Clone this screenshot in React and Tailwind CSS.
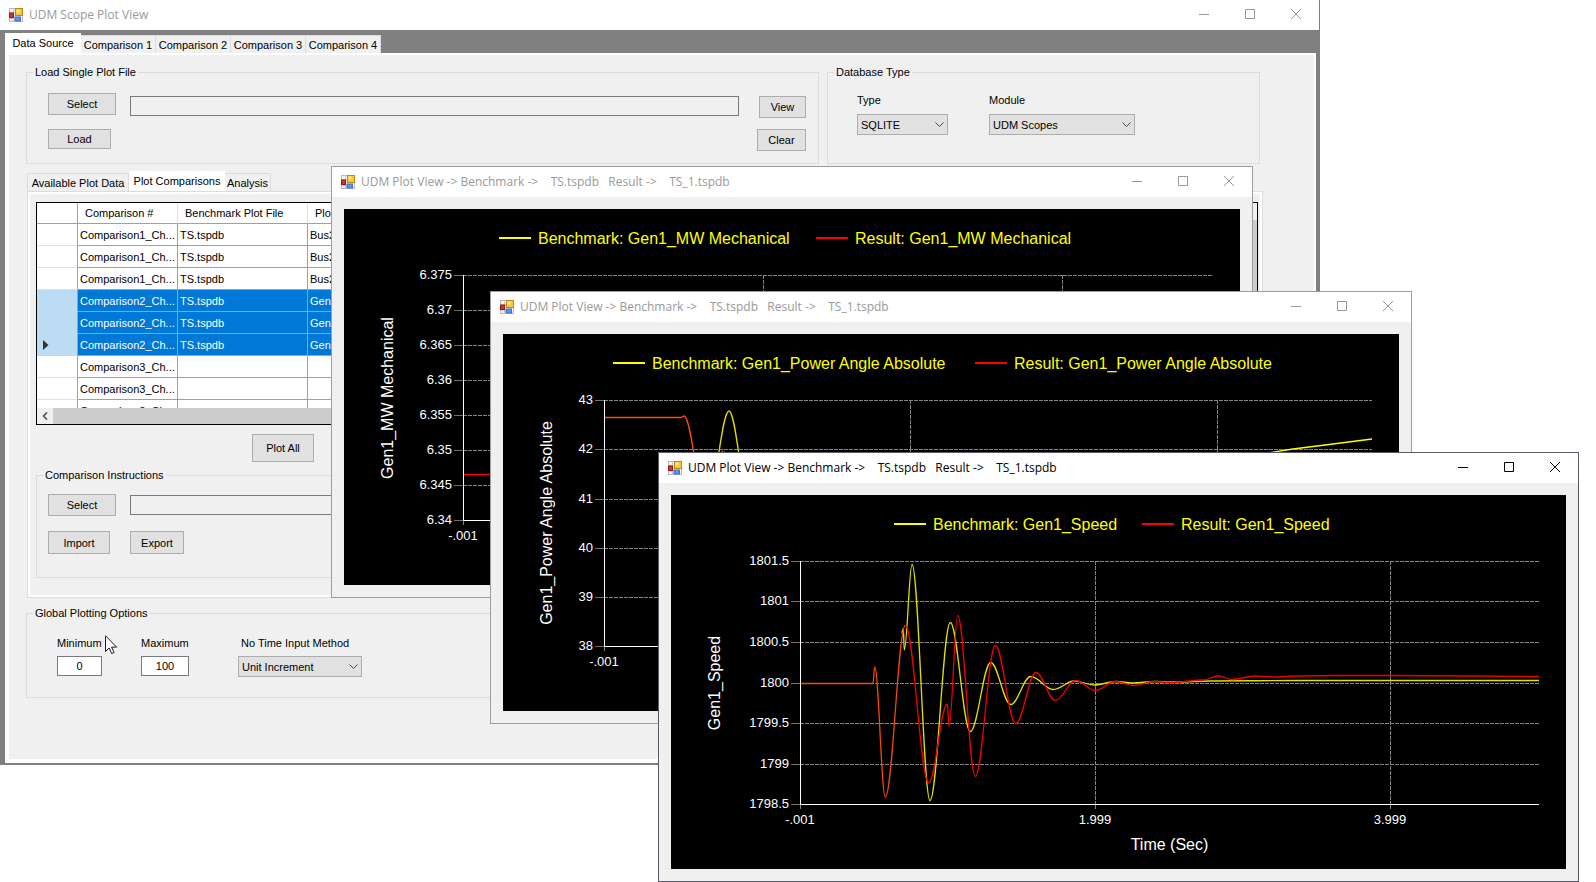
import React, { useState } from 'react';
import clsx from 'clsx';

const GRID_ROWS = [
  { id: 1, name: 'Comparison1_Ch...', file: 'TS.tspdb', item: 'Bus2' },
  { id: 2, name: 'Comparison1_Ch...', file: 'TS.tspdb', item: 'Bus2' },
  { id: 3, name: 'Comparison1_Ch...', file: 'TS.tspdb', item: 'Bus2' },
  { id: 4, name: 'Comparison2_Ch...', file: 'TS.tspdb', item: 'Gen', selected: true },
  { id: 5, name: 'Comparison2_Ch...', file: 'TS.tspdb', item: 'Gen', selected: true },
  { id: 6, name: 'Comparison2_Ch...', file: 'TS.tspdb', item: 'Gen', selected: true, current: true },
  { id: 7, name: 'Comparison3_Ch...', file: '', item: '' },
  { id: 8, name: 'Comparison3_Ch...', file: '', item: '' },
  { id: 9, name: 'Comparison3_Ch...', file: '', item: '' },
];

const MECHANICAL = {
  width: 896,
  height: 376,
  name: 'Gen1_MW Mechanical',
  legend: [155, 472],
  left: 119,
  right: 869,
  yTicks: [['6.375', 66], ['6.37', 101], ['6.365', 136], ['6.36', 171], ['6.355', 206], ['6.35', 241], ['6.345', 276], ['6.34', 311]],
  xTicks: [['-.001', 119], ['', 419], ['', 718]],
  series: [{ color: '#ff0000', points: [[120, 265.5], [869, 265.5]] }],
};

const ANGLE = {
  width: 896,
  height: 377,
  name: 'Gen1_Power Angle Absolute',
  legend: [110, 472],
  left: 101,
  right: 869,
  yTicks: [['43', 66], ['42', 115], ['41', 165], ['40', 214], ['39', 263], ['38', 312]],
  xTicks: [['-.001', 101], ['', 407], ['', 714]],
  series: [
    { color: '#dfdf00', points: [[205, 165], [226, 77], [246, 165]] },
    { color: '#ff0000', points: [[204, 165], [220, 117], [236, 165]] },
    { color: '#ff4a0a', points: [[102, 83.5], [178, 83.5], [181, 82], [202, 165]] },
    { color: '#ffff00', straight: true, points: [[740, 123], [790, 115], [830, 110], [869, 105]] },
  ],
};

// Shared by both runs until the fault clears
const FAULT = [[130, 188.5], [202, 188.5], [203.7, 172], [214.3, 302], [234.3, 130.5]];

const SPEED = {
  width: 895,
  height: 374,
  name: 'Gen1_Speed',
  legend: [223, 471],
  left: 129,
  right: 868,
  yTicks: [['1801.5', 66], ['1801', 106], ['1800.5', 147], ['1800', 188], ['1799.5', 228], ['1799', 269], ['1798.5', 309]],
  xTicks: [['-.001', 129], ['1.999', 424], ['3.999', 719]],
  xTitle: 'Time (Sec)',
  series: [
    {
      color: '#e0e000',
      points: [
        [230.5, 138], [232.3, 134], [233.3, 155], [241, 69.5], [259, 305.5], [279.3, 127.5], [299.3, 236.5],
        [319.7, 167.5], [339.7, 209.5], [359.7, 181.5], [382.3, 194.5], [403.3, 186], [423.3, 190],
        [445, 186.5], [461.3, 188], [484, 186.5], [505, 187], [539, 186], [629, 185.5], [868, 185.5],
      ],
    },
    { color: '#f04a0a', points: FAULT },
    {
      color: '#f00000',
      points: [
        [234.3, 130.5], [257.7, 288], [276.3, 209], [278, 231.5], [286.7, 120.5], [304.3, 281.5],
        [324.3, 150.5], [344.7, 228.5], [365, 177.5], [384.3, 205.5], [404.7, 185.5], [424.3, 195.5],
        [444, 186.5], [463.3, 190.5], [483, 186.5], [500, 187.5], [532, 185], [547.3, 181], [560.7, 184.5],
        [584, 181], [602, 182], [625, 181], [662, 180.5], [719, 180.5], [868, 181.5],
      ],
    },
  ],
};

// Points are the turning points of the signal, joined with half sine waves
function toPath(points, straight) {
  return points
    .map(([x, y], i) => {
      if (i === 0) return `M${x} ${y}`;
      if (straight) return `L${x} ${y}`;
      const [px, py] = points[i - 1];
      const dx = (x - px) * 0.3642;
      return `C${px + dx} ${py} ${x - dx} ${y} ${x} ${y}`;
    })
    .join(' ');
}

function AppIcon() {
  return (
    <svg width="14" height="14" viewBox="0 0 14 14" className="shrink-0" aria-hidden="true">
      <rect x="0.5" y="0.5" width="13" height="13" fill="#f4f4f4" stroke="#b9b9b9" />
      <path d="M4.5 0v14M9.5 9v5M0 4.5h6M0 10.5h6" stroke="#c9c9c9" fill="none" />
      <rect x="6.5" y="0.5" width="7" height="7" fill="#f6c93c" stroke="#b98a12" />
      <rect x="7.5" y="1.5" width="3" height="3" fill="#fde48a" />
      <rect x="0.5" y="5" width="4" height="4.5" fill="#d0342c" stroke="#8f1d18" />
      <rect x="6" y="9" width="5.5" height="4" fill="#5b93ee" stroke="#3f6fd0" />
    </svg>
  );
}

function WindowButton({ label, path }) {
  return (
    <button type="button" aria-label={label} className="flex h-7 w-[46px] shrink-0 items-center justify-center self-start">
      <svg width="10" height="10" viewBox="0 0 10 10" fill="none" stroke="currentColor" aria-hidden="true">
        <path d={path} />
      </svg>
    </button>
  );
}

function TitleBar({ title, active }) {
  return (
    <div className={clsx('flex h-[30px] items-center bg-white pl-[9px]', active ? 'text-black' : 'text-[#999999]')}>
      <AppIcon />
      <span className="ml-[6px] flex-1 overflow-hidden whitespace-pre font-['Open_Sans',sans-serif] text-[12px] leading-[18px]">
        {title}
      </span>
      <WindowButton label="Minimize" path="M0 5.5h10" />
      <WindowButton label="Maximize" path="M0.5 0.5h9v9h-9z" />
      <WindowButton label="Close" path="M0 0l10 10M10 0l-10 10" />
    </div>
  );
}

function Button({ className, children }) {
  return (
    <button type="button" className={clsx('border border-[#adadad] bg-[#e1e1e1] text-center leading-4', className)}>
      {children}
    </button>
  );
}

function GroupBox({ title, className, children }) {
  return (
    <fieldset className={clsx('min-w-0 border border-[#dcdcdc]', className)}>
      <legend className="ml-[6px] px-[2px] leading-4">{title}</legend>
      {children}
    </fieldset>
  );
}

function Dropdown({ id, label, value, className, labelClassName }) {
  return (
    <div className={clsx('flex flex-col', className)}>
      <label htmlFor={id} className={clsx('whitespace-nowrap leading-4', labelClassName)}>{label}</label>
      <div className="relative">
        <select
          id={id}
          defaultValue={value}
          className="block h-[21px] w-full appearance-none border border-[#adadad] bg-[#e1e1e1] pl-[3px] leading-4"
        >
          <option>{value}</option>
        </select>
        <svg
          width="9"
          height="6"
          viewBox="0 0 9 6"
          className="pointer-events-none absolute right-1 top-2"
          fill="none"
          stroke="#444444"
          aria-hidden="true"
        >
          <path d="M0.5 0.5l4 4 4-4" />
        </svg>
      </div>
    </div>
  );
}

function NumberField({ id, label, value, className }) {
  return (
    <div className={clsx('flex flex-col gap-[5px]', className)}>
      <label htmlFor={id} className="whitespace-nowrap leading-4">{label}</label>
      <input id={id} defaultValue={value} className="h-5 w-full border border-[#7a7a7a] bg-white text-center leading-4" />
    </div>
  );
}

function TabStrip({ tabs, active, onSelect, className }) {
  return (
    <div role="tablist" className={clsx('flex items-end', className)}>
      {tabs.map((tab) => (
        <button
          key={tab.name}
          type="button"
          role="tab"
          aria-selected={tab.name === active}
          onClick={() => onSelect(tab.name)}
          className={clsx(
            'whitespace-nowrap text-center leading-4',
            tab.className,
            tab.name === active ? 'h-5 bg-white' : 'h-[18px] border-r border-t border-[#dcdcdc] bg-[#f0f0f0]'
          )}
        >
          {tab.name}
        </button>
      ))}
    </div>
  );
}

function ComparisonGrid() {
  return (
    <div className="border border-black bg-white">
      <div className="flex h-[205px] overflow-hidden">
        <table className="w-full table-fixed border-separate border-spacing-0 text-left">
          <colgroup>
            <col className="w-[41px]" />
            <col className="w-[100px]" />
            <col className="w-[130px]" />
            <col />
          </colgroup>
          <thead>
            <tr className="h-[21px]">
              <th className="border-b border-r border-[#a0a0a0]" />
              <th className="border-b border-r border-[#a0a0a0] border-r-[#e0e0e0] pl-[7px] font-normal leading-4">Comparison #</th>
              <th className="border-b border-r border-[#a0a0a0] border-r-[#e0e0e0] pl-[7px] font-normal leading-4">Benchmark Plot File</th>
              <th className="border-b border-[#a0a0a0] pl-[7px] font-normal leading-4">Plot</th>
            </tr>
          </thead>
          <tbody>
            {GRID_ROWS.map((row) => {
              const cell = clsx(
                'overflow-hidden whitespace-nowrap border-b border-r border-[#a0a0a0] pl-[2px] leading-4',
                row.selected && 'bg-[#0078d7] text-white'
              );
              return (
                <tr key={row.id} className="h-[22px]">
                  <td
                    className={clsx(
                      'border-b border-r border-r-[#a0a0a0] pl-[6px]',
                      row.selected ? 'border-b-[#bcdcf4] bg-[#bcdcf4]' : 'border-b-[#e0e0e0]'
                    )}
                  >
                    {row.current && (
                      <svg width="6" height="10" viewBox="0 0 6 10" fill="#333333" aria-hidden="true">
                        <path d="M0 0l5.5 5-5.5 5z" />
                      </svg>
                    )}
                  </td>
                  <td className={cell}>{row.name}</td>
                  <td className={cell}>{row.file}</td>
                  <td className={cell}>{row.item}</td>
                </tr>
              );
            })}
          </tbody>
        </table>
        <div className="w-[17px] shrink-0 bg-[#f0f0f0] pt-[17px]">
          <div className="h-full bg-[#cdcdcd]" />
        </div>
      </div>
      <div className="flex h-4 bg-[#f0f0f0]">
        <div className="flex w-4 items-center justify-center">
          <svg width="6" height="8" viewBox="0 0 6 8" fill="none" stroke="#505050" strokeWidth="1.6" aria-hidden="true">
            <path d="M5 0.5L1.5 4 5 7.5" />
          </svg>
        </div>
        <div className="mr-[34px] flex-1 bg-[#cdcdcd]" />
      </div>
    </div>
  );
}

function PlotChart({ chart }) {
  const { width, height, name, legend, left, right, yTicks, xTicks, xTitle, series } = chart;
  const top = yTicks[0][1];
  const bottom = yTicks[yTicks.length - 1][1];
  const middle = Math.round((top + bottom) / 2);

  return (
    <svg
      viewBox={`0 0 ${width} ${height}`}
      className="block h-auto w-full bg-black font-['Liberation_Sans',Arial,sans-serif]"
      role="img"
      aria-label={name}
    >
      {/* Legend */}
      <path d={`M${legend[0]} 29h32`} stroke="#ffff00" strokeWidth="2" />
      <text x={legend[0] + 39} y="35" fontSize="16" fill="#ffff00">Benchmark: {name}</text>
      <path d={`M${legend[1]} 29h32`} stroke="#ff0000" strokeWidth="2" />
      <text x={legend[1] + 39} y="35" fontSize="16" fill="#ffff00">Result: {name}</text>

      {/* Grid lines */}
      {yTicks.map(([label, y]) => (
        <g key={label}>
          <path d={`M${left} ${y + 0.5}H${right}`} stroke="#858585" strokeDasharray="4 1" />
          <path d={`M${left - 9} ${y + 0.5}h9`} stroke="#707070" />
          <text x={left - 11} y={y + 4} fontSize="13" fill="#ffffff" textAnchor="end">{label}</text>
        </g>
      ))}
      {xTicks.map(([label, x]) => (
        <g key={x}>
          <path d={`M${x + 0.5} ${top}V${bottom}`} stroke="#858585" strokeDasharray="4 1" />
          <path d={`M${x + 0.5} ${bottom}v5`} stroke="#858585" />
          {label && (
            <text x={x} y={bottom + 20} fontSize="13" fill="#ffffff" textAnchor="middle">{label}</text>
          )}
        </g>
      ))}

      {/* Axes */}
      <path d={`M${left + 0.5} ${top}V${bottom + 0.5}H${right}`} stroke="#ffffff" fill="none" />
      <text
        x="49"
        y={middle}
        fontSize="16"
        fill="#ffffff"
        textAnchor="middle"
        transform={`rotate(-90 49 ${middle})`}
      >
        {name}
      </text>
      {xTitle && (
        <text x={(left + right) / 2} y={bottom + 46} fontSize="16" fill="#ffffff" textAnchor="middle">{xTitle}</text>
      )}

      {series.map((s, i) => (
        <path key={i} d={toPath(s.points, s.straight)} stroke={s.color} strokeWidth="1.3" fill="none" />
      ))}
    </svg>
  );
}

function PlotWindow({ chart, active, className }) {
  return (
    <section
      className={clsx('absolute border bg-[#f0f0f0]', active ? 'border-[#5a5a66]' : 'border-[#9c9ca2]', className)}
    >
      <TitleBar active={active} title="UDM Plot View -> Benchmark ->    TS.tspdb   Result ->    TS_1.tspdb" />
      <div className="p-3">
        <PlotChart chart={chart} />
      </div>
    </section>
  );
}

const MAIN_TABS = [
  { name: 'Data Source', className: 'w-[76px]' },
  { name: 'Comparison 1', className: 'w-[75px]' },
  { name: 'Comparison 2', className: 'w-[75px]' },
  { name: 'Comparison 3', className: 'w-[75px]' },
  { name: 'Comparison 4', className: 'w-[75px]' },
];

const PLOT_TABS = [
  { name: 'Available Plot Data', className: 'w-[102px] border-l' },
  { name: 'Plot Comparisons', className: 'w-[96px]' },
  { name: 'Analysis', className: 'w-[46px]' },
];

function ScopeWindow() {
  const [mainTab, setMainTab] = useState('Data Source');
  const [plotTab, setPlotTab] = useState('Plot Comparisons');

  return (
    <main className="mr-[276px] border-r border-[#808080] bg-[#808080] pb-[2px]">
      <TitleBar title="UDM Scope Plot View" />
      <TabStrip tabs={MAIN_TABS} active={mainTab} onSelect={setMainTab} className="pl-[5px] pt-[3px]" />

      <div className="ml-[5px] mr-[3px] border-y-2 border-b-4 border-l-4 border-r-2 border-white bg-[#f0f0f0] pb-[61px] pl-[17px] pr-[54px] pt-[9px]">
        <div className="flex items-stretch gap-2">
          <GroupBox title="Load Single Plot File" className="flex-1">
            <div className="flex pb-3 pl-[21px] pr-3">
              <div className="flex w-[82px] shrink-0 flex-col items-start gap-[14px] pt-[13px]">
                <Button className="h-[22px] w-[68px]">Select</Button>
                <Button className="h-5 w-[63px]">Load</Button>
              </div>
              <input
                aria-label="Plot file"
                readOnly
                className="mr-[18px] mt-4 h-5 min-w-0 flex-1 border border-[#7a7a7a] bg-[#f0f0f0] px-1"
              />
              <div className="flex shrink-0 flex-col items-end gap-[11px] pt-4">
                <Button className="h-[22px] w-[47px]">View</Button>
                <Button className="h-[22px] w-[49px]">Clear</Button>
              </div>
            </div>
          </GroupBox>

          <GroupBox title="Database Type" className="w-[433px]">
            <div className="flex gap-[41px] pl-[29px] pt-3">
              <Dropdown id="db-type" label="Type" value="SQLITE" className="w-[91px] gap-[6px]" />
              <Dropdown id="db-module" label="Module" value="UDM Scopes" className="w-[146px] gap-[6px]" />
            </div>
          </GroupBox>
        </div>

        <TabStrip tabs={PLOT_TABS} active={plotTab} onSelect={setPlotTab} className="ml-px mt-[7px]" />
        <div className="-mr-[3px] ml-px border border-[#dcdcdc] bg-white p-[2px]">
          <div className="bg-[#f0f0f0] pb-[17px] pl-[6px] pr-[2px] pt-2">
            <ComparisonGrid />
            <Button className="ml-[216px] mt-[9px] block h-7 w-[62px]">Plot All</Button>

            <GroupBox title="Comparison Instructions" className="mt-[5px]">
              <div className="grid grid-cols-[82px_1fr] items-center gap-y-[15px] pb-[23px] pl-[11px] pr-3 pt-[11px]">
                <Button className="h-[22px] w-[68px]">Select</Button>
                <input
                  aria-label="Instructions file"
                  readOnly
                  className="h-5 border border-[#7a7a7a] bg-[#f0f0f0] px-1"
                />
                <Button className="h-[23px] w-[62px]">Import</Button>
                <Button className="h-[23px] w-[54px]">Export</Button>
              </div>
            </GroupBox>
          </div>
        </div>

        <GroupBox title="Global Plotting Options" className="mt-[7px]">
          <div className="flex pb-5 pl-[30px] pt-[14px]">
            <NumberField id="minimum" label="Minimum" value="0" className="mr-[39px] w-[45px]" />
            <NumberField id="maximum" label="Maximum" value="100" className="mr-[49px] w-[48px]" />
            <Dropdown
              id="time-method"
              label="No Time Input Method"
              value="Unit Increment"
              className="w-[124px] gap-[5px]"
              labelClassName="pl-[3px]"
            />
          </div>
        </GroupBox>
      </div>
    </main>
  );
}

export default function App() {
  return (
    <div className="relative min-h-screen overflow-hidden bg-white font-['Liberation_Sans',Arial,sans-serif] text-[11px] leading-4 text-black">
      <ScopeWindow />

      <PlotWindow chart={MECHANICAL} className="left-[331px] right-[343px] top-[166px]" />
      <PlotWindow chart={ANGLE} className="left-[490px] right-[184px] top-[291px]" />
      <PlotWindow chart={SPEED} active className="left-[658px] right-[17px] top-[452px]" />

      {/* Mouse pointer */}
      <svg
        width="13"
        height="20"
        viewBox="0 0 13 20"
        className="pointer-events-none absolute left-[105px] top-[635px]"
        fill="#ffffff"
        stroke="#1a1a2a"
        aria-hidden="true"
      >
        <path d="M0.5 0.8v15.7l3.6-3.5 2.6 5.6 2.4-1.1-2.5-5.4h5z" />
      </svg>
    </div>
  );
}
